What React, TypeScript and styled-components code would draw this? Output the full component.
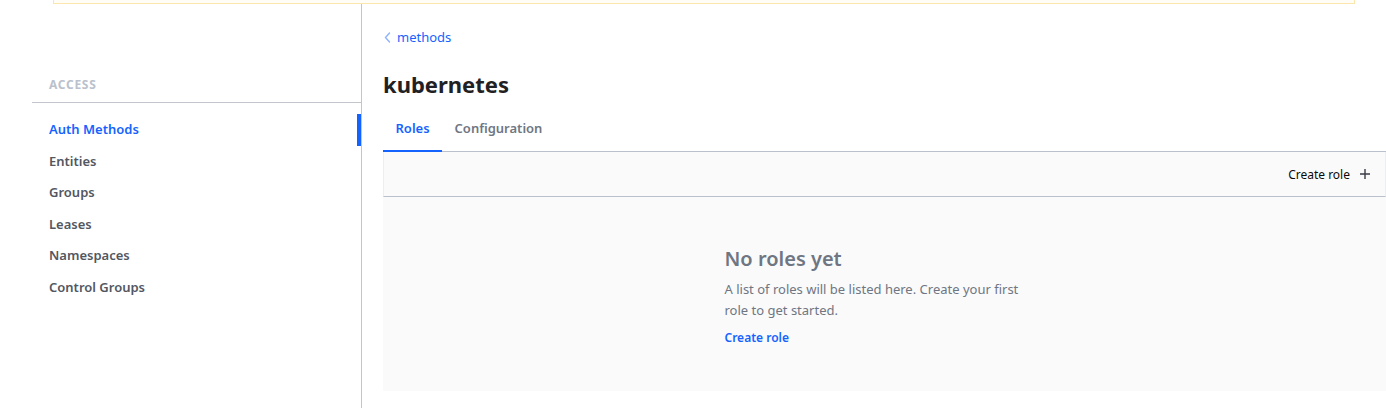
import styled, { createGlobalStyle } from "styled-components"

const GlobalStyle = createGlobalStyle`
	body {
		margin: 0;
		background: #ffffff;
		font-family: "Noto Sans", "Open Sans", Arial, sans-serif;
		color: #0a0a0a;
		font-size: 13px;
	}
`

const navItems = ["Auth Methods", "Entities", "Groups", "Leases", "Namespaces", "Control Groups"]

const ChevronLeft = () => (
	<svg width="7" height="11" viewBox="0 0 7 11" fill="none">
		<path d="M5.5 1 1.5 5.5 5.5 10" stroke="#8fb3ff" strokeWidth="1.4" strokeLinecap="round" />
	</svg>
)

const PlusIcon = () => (
	<svg width="10" height="10" viewBox="0 0 10 10">
		<path d="M5 0v10M0 5h10" stroke="#3b3d45" strokeWidth="1.4" />
	</svg>
)

const App = () => {
	return (
		<>
			<GlobalStyle />
			<Banner />
			<Page>
				<Sidebar>
					<SectionLabel>Access</SectionLabel>
					<NavList>
						{navItems.map((item, i) => (
							<NavItem key={item} $active={i === 0}>
								{item}
							</NavItem>
						))}
					</NavList>
				</Sidebar>
				<Main>
					<Breadcrumb>
						<ChevronLeft />
						<span>methods</span>
					</Breadcrumb>
					<Title>kubernetes</Title>
					<Tabs>
						<Tab $active>Roles</Tab>
						<Tab>Configuration</Tab>
					</Tabs>
					<Toolbar>
						<ToolbarButton>
							Create role
							<PlusIcon />
						</ToolbarButton>
					</Toolbar>
					<EmptyState>
						<EmptyContent>
							<EmptyTitle>No roles yet</EmptyTitle>
							<EmptyText>
								A list of roles will be listed here. Create your first role to get started.
							</EmptyText>
							<EmptyLink href="#">Create role</EmptyLink>
						</EmptyContent>
					</EmptyState>
				</Main>
			</Page>
		</>
	)
}

export default App

const Banner = styled.div`
	height: 3px;
	margin: 0 31px 0 53px;
	border: 1px solid #fbe7ad;
	border-top: none;
	background: #fffdf6;
`

const Page = styled.div`
	display: flex;
	min-height: 404px;
`

const Sidebar = styled.aside`
	margin-left: 32px;
	width: 329px;
	border-right: 1px solid #c2c5cc;
	flex-shrink: 0;
`

const SectionLabel = styled.div`
	padding: 72px 0 8px 17px;
	border-bottom: 1px solid #c2c5cc;
	font-size: 12px;
	line-height: 18px;
	font-weight: 700;
	letter-spacing: 0.06em;
	text-transform: uppercase;
	color: #bac1cc;
`

const NavList = styled.nav`
	display: flex;
	flex-direction: column;
	padding-top: 11px;
`

const NavItem = styled.a<{ $active?: boolean }>`
	display: block;
	padding: 5.25px 17px;
	line-height: 21px;
	font-size: 13px;
	font-weight: 600;
	color: ${(p) => (p.$active ? "#1563ff" : "#525761")};
	box-shadow: ${(p) => (p.$active ? "inset -4px 0 0 #1563ff" : "none")};
`

const Main = styled.main`
	flex: 1;
	min-width: 0;
	padding-left: 21px;
`

const Breadcrumb = styled.a`
	display: flex;
	align-items: center;
	gap: 6px;
	margin-top: 24px;
	padding-left: 1px;
	line-height: 18px;
	font-size: 13px;
	color: #1563ff;
`

const Title = styled.h1`
	margin: 0;
	padding-top: 22px;
	font-size: 22px;
	line-height: 32px;
	font-weight: 700;
	color: #1f2124;
`

const Tabs = styled.div`
	display: flex;
	margin-top: 9.5px;
	border-bottom: 1px solid #bac1cc;
`

const Tab = styled.div<{ $active?: boolean }>`
	padding: 8px 12.5px 13.5px;
	line-height: 21px;
	font-size: 13px;
	font-weight: 600;
	color: ${(p) => (p.$active ? "#1563ff" : "#6f7682")};
	box-shadow: ${(p) => (p.$active ? "inset 0 -2px 0 #1563ff" : "none")};
	margin-bottom: -1px;
`

const Toolbar = styled.div`
	display: flex;
	justify-content: flex-end;
	align-items: center;
	height: 44px;
	background: #fafafb;
	border-left: 1px solid #ebeef2;
	border-right: 1px solid #ebeef2;
	border-bottom: 1px solid #bac1cc;
`

const ToolbarButton = styled.button`
	display: flex;
	align-items: center;
	gap: 10px;
	margin-right: 15px;
	padding: 0;
	border: none;
	background: none;
	font-family: inherit;
	font-size: 12px;
	color: #0a0a0a;
`

const EmptyState = styled.div`
	display: flex;
	justify-content: center;
	height: 194px;
	background: #fafafb;
`

const EmptyContent = styled.div`
	width: 320px;
	padding-top: 48px;
`

const EmptyTitle = styled.h3`
	margin: 0;
	font-size: 20px;
	line-height: 28px;
	font-weight: 600;
	color: #6f7682;
`

const EmptyText = styled.p`
	margin: 6px 0 7px;
	font-size: 13px;
	line-height: 21px;
	color: #6f7682;
`

const EmptyLink = styled.a`
	font-size: 12px;
	font-weight: 600;
	color: #1563ff;
	text-decoration: none;
`
